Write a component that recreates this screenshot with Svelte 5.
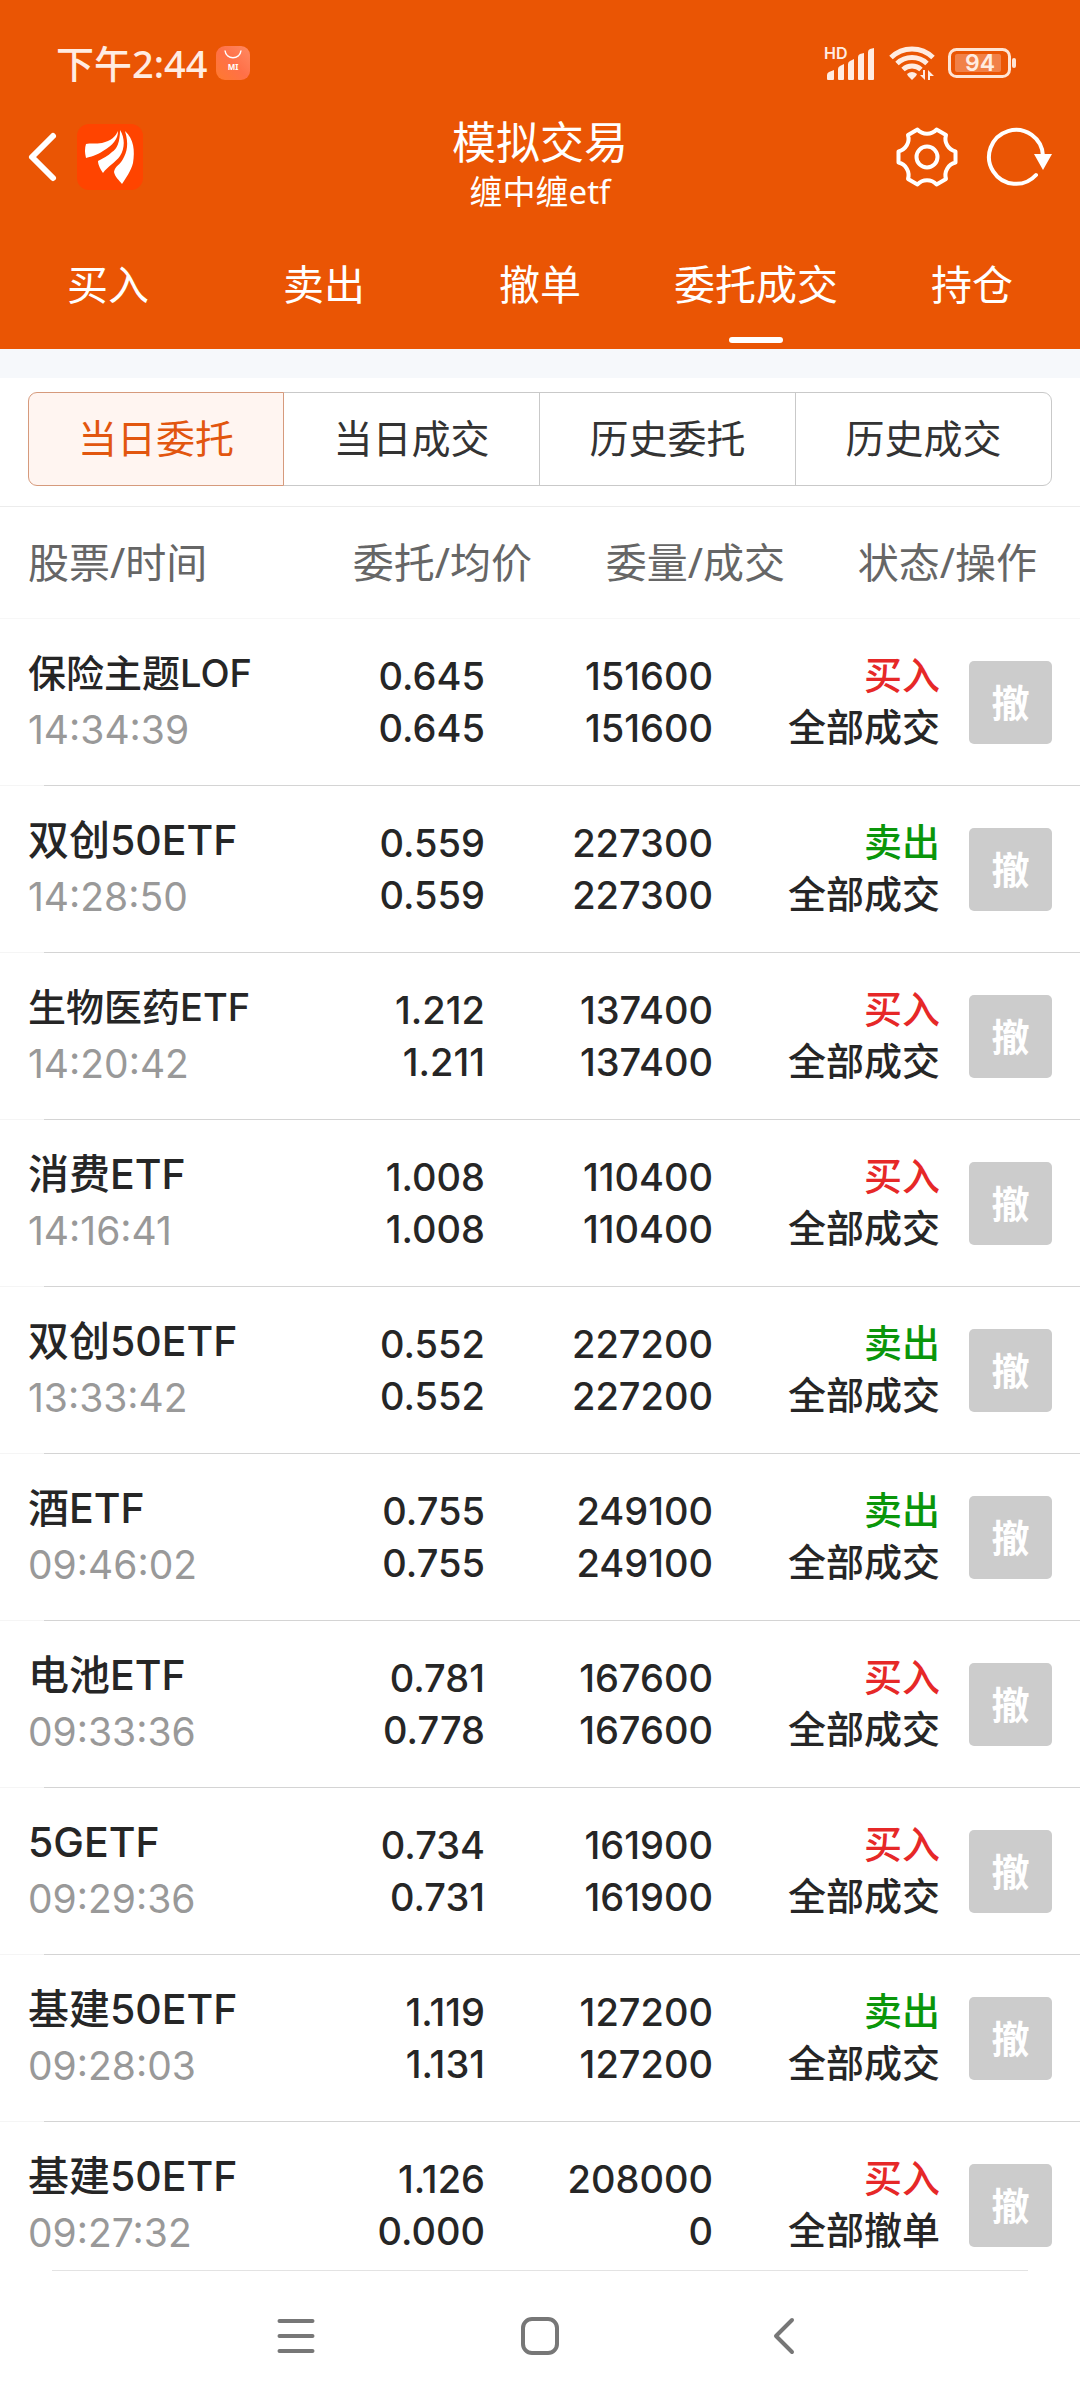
<script lang="ts">
    type Order = {
        name: string;
        time: string;
        price: string;
        avg: string;
        qty: string;
        filled: string;
        side: 'buy' | 'sell';
        status: string;
    };

    const tabs = ['买入', '卖出', '撤单', '委托成交', '持仓'];
    const views = ['当日委托', '当日成交', '历史委托', '历史成交'];

    const orders: Order[] = [
        { name: '保险主题LOF', time: '14:34:39', price: '0.645', avg: '0.645', qty: '151600', filled: '151600', side: 'buy', status: '全部成交' },
        { name: '双创50ETF', time: '14:28:50', price: '0.559', avg: '0.559', qty: '227300', filled: '227300', side: 'sell', status: '全部成交' },
        { name: '生物医药ETF', time: '14:20:42', price: '1.212', avg: '1.211', qty: '137400', filled: '137400', side: 'buy', status: '全部成交' },
        { name: '消费ETF', time: '14:16:41', price: '1.008', avg: '1.008', qty: '110400', filled: '110400', side: 'buy', status: '全部成交' },
        { name: '双创50ETF', time: '13:33:42', price: '0.552', avg: '0.552', qty: '227200', filled: '227200', side: 'sell', status: '全部成交' },
        { name: '酒ETF', time: '09:46:02', price: '0.755', avg: '0.755', qty: '249100', filled: '249100', side: 'sell', status: '全部成交' },
        { name: '电池ETF', time: '09:33:36', price: '0.781', avg: '0.778', qty: '167600', filled: '167600', side: 'buy', status: '全部成交' },
        { name: '5GETF', time: '09:29:36', price: '0.734', avg: '0.731', qty: '161900', filled: '161900', side: 'buy', status: '全部成交' },
        { name: '基建50ETF', time: '09:28:03', price: '1.119', avg: '1.131', qty: '127200', filled: '127200', side: 'sell', status: '全部成交' },
        { name: '基建50ETF', time: '09:27:32', price: '1.126', avg: '0.000', qty: '208000', filled: '0', side: 'buy', status: '全部撤单' },
    ];

    let activeTab = $state(3);
    let activeView = $state(0);

    // four Chinese characters and a suffix need the smaller size
    function isLong(name: string) {
        return /^[^\x00-\x7f]{4}/.test(name);
    }
</script>

<div class="page">
    <header>
        <div class="status-bar">
            <span class="clock">下午2:44</span>
            <svg class="mi" width="34" height="34" viewBox="0 0 34 34">
                <defs>
                    <linearGradient id="mi-bg" x1="0" y1="1" x2="1" y2="0">
                        <stop offset="0" stop-color="#ff7a2e" />
                        <stop offset="0.5" stop-color="#ff7048" />
                        <stop offset="1" stop-color="#ff8a62" />
                    </linearGradient>
                </defs>
                <rect width="34" height="34" rx="9" fill="url(#mi-bg)" />
                <path d="M9 4.500C10 14 24 14 25 4.500" fill="none" stroke="#fff" stroke-width="1.500" />
                <text x="17" y="24" text-anchor="middle" font-size="8" font-weight="700" fill="#fff">MI</text>
            </svg>
            <div class="indicators">
                <svg width="52" height="36" viewBox="0 0 52 36" fill="#ffece2">
                    <text x="0" y="14" font-size="16" font-weight="600">HD</text>
                    <path d="M3 34v-4q0-2 2-3l5-2v9q0 1-1 1h-5q-1 0-1-1z" />
                    <path d="M14 34v-10q0-2 2-3l4-2v15q0 1-1 1h-4q-1 0-1-1z" />
                    <path d="M24 34v-15q0-2 2-3l4-2v20q0 1-1 1h-4q-1 0-1-1z" />
                    <path d="M34 34v-22q0-2 2-3l4-1v26q0 1-1 1h-4q-1 0-1-1z" />
                    <path d="M44 34v-27q0-2 2-3l4-1v31q0 1-1 1h-4q-1 0-1-1z" />
                </svg>
                <svg width="46" height="36" viewBox="0 0 46 36">
                    <g fill="none" stroke="#ffece2" stroke-width="5">
                        <path d="M2 12.500A30 30 0 0 1 44 12.500" />
                        <path d="M8 18.500A22 22 0 0 1 38 18.500" />
                        <path d="M14 24.500A13.500 13.500 0 0 1 32 24.500" />
                    </g>
                    <path d="M18 29q5-4 10 0l-1 2-4 4-4-4z" fill="#ffece2" />
                    <path d="M31 30h3v-5h2v10zM39 35v-10l6 6h-4v4z" fill="#ffece2" />
                </svg>
                <svg width="70" height="30" viewBox="0 0 70 30">
                    <rect x="1.500" y="1.500" width="60" height="27" rx="7" fill="none" stroke="#ffe4d4" stroke-width="3" />
                    <rect x="7" y="6" width="46" height="18" rx="2" fill="#f18148" />
                    <rect x="64" y="10" width="4" height="10" rx="2" fill="#ffe4d4" />
                    <text x="32" y="23" text-anchor="middle" font-size="23" font-weight="600" fill="#ffece2">94</text>
                </svg>
            </div>
        </div>

        <div class="app-bar">
            <div class="side">
                <button class="icon" type="button" aria-label="返回">
                    <svg width="30" height="50" viewBox="0 0 30 50" fill="none" stroke="#fff" stroke-width="6" stroke-linecap="round" stroke-linejoin="round">
                        <path d="M25 4L4 25L25 46" />
                    </svg>
                </button>
                <svg class="logo" width="66" height="66" viewBox="0 0 66 66">
                    <rect width="66" height="66" rx="12" fill="#ff4400" />
                    <g fill="#fff">
                        <path d="M41 7C39 12 34 17 25 19C19 20 13 19 9 20Q7 26 9 34C13 33 20 31 26 27C36 21 41 15 41 7Z" />
                        <path d="M43 6C43 18 40 25 35 28C31 32 26 34 21 37C21 41 24 46 26 49C30 43 39 38 43 32C48 24 48 14 43 6Z" />
                        <path d="M48 7C52 20 50 28 46 35C43 41 38 42 37 48C38 53 42 56 45 60C49 54 54 47 56 39C58 27 57 15 48 7Z" />
                    </g>
                </svg>
            </div>
            <div class="title">
                <h1>模拟交易</h1>
                <p>缠中缠etf</p>
            </div>
            <div class="side actions">
                <button class="icon" type="button" aria-label="设置">
                    <svg width="62" height="62" viewBox="-31 -31 62 62" fill="none" stroke="#fff" stroke-width="4" stroke-linejoin="round">
                        <path d="M-9.500-27.400A13 13 0 0 0 9.500-27.400L19-21.900A13 13 0 0 0 28.500-5.500V5.500A13 13 0 0 0 19 21.900L9.500 27.400A13 13 0 0 0-9.500 27.400L-19 21.900A13 13 0 0 0-28.500 5.500V-5.500A13 13 0 0 0-19-21.900Z" />
                        <circle r="10.500" />
                    </svg>
                </button>
                <button class="icon" type="button" aria-label="刷新">
                    <svg width="66" height="62" viewBox="-30 -31 66 62">
                        <path d="M20 18A27 27 0 1 1 27-1" fill="none" stroke="#fff" stroke-width="4" stroke-linecap="round" />
                        <path d="M18-3H36L27 13Z" fill="#fff" />
                    </svg>
                </button>
            </div>
        </div>

        <nav class="tabs">
            {#each tabs as tab, i}
                <button type="button" class:active={i === activeTab} onclick={() => (activeTab = i)}>{tab}</button>
            {/each}
        </nav>
    </header>

    <main>
        <div class="views">
            {#each views as view, i}
                <button type="button" class:active={i === activeView} onclick={() => (activeView = i)}>{view}</button>
            {/each}
        </div>

        <table>
            <colgroup>
                <col />
                <col class="c-price" />
                <col class="c-qty" />
                <col class="c-status" />
                <col class="c-action" />
            </colgroup>
            <thead>
                <tr>
                    <th class="name">股票/时间</th>
                    <th>委托/均价</th>
                    <th>委量/成交</th>
                    <th class="last" colspan="2">状态/操作</th>
                </tr>
            </thead>
            <tbody>
                {#each orders as order}
                    <tr>
                        <td class="name">
                            <div class:long={isLong(order.name)}>{order.name}</div>
                            <time>{order.time}</time>
                        </td>
                        <td class="price">{order.price}<br />{order.avg}</td>
                        <td class="qty">{order.qty}<br />{order.filled}</td>
                        <td class="status">
                            <span class={order.side}>{order.side === 'buy' ? '买入' : '卖出'}</span><br />{order.status}
                        </td>
                        <td class="action"><button type="button" disabled>撤</button></td>
                    </tr>
                {/each}
            </tbody>
        </table>
    </main>

    <nav class="system">
        <button type="button" aria-label="菜单">
            <svg width="40" height="40" viewBox="0 0 40 40" stroke="#777" stroke-width="4" stroke-linecap="round">
                <path d="M3.500 5h33M3.500 20h33M3.500 35h33" />
            </svg>
        </button>
        <button type="button" aria-label="主页">
            <svg width="40" height="40" viewBox="0 0 40 40" fill="none" stroke="#777" stroke-width="4">
                <rect x="3" y="3" width="34" height="34" rx="9" />
            </svg>
        </button>
        <button type="button" aria-label="后退">
            <svg width="40" height="40" viewBox="0 0 40 40" fill="none" stroke="#777" stroke-width="4" stroke-linecap="round" stroke-linejoin="round">
                <path d="M28 4L12 20L28 36" />
            </svg>
        </button>
    </nav>
</div>

<style>
    :global(body) {
        margin: 0;
        background: #fff;
    }

    .page {
        font-family: 'Noto Sans', 'Noto Sans CJK SC', sans-serif;
        color: #262626;
        background: #fff;
    }

    button {
        padding: 0;
        border: 0;
        background: none;
        color: inherit;
        font: inherit;
        cursor: pointer;
    }

    svg {
        display: block;
        flex-shrink: 0;
        overflow: visible;
    }

    header {
        background: #ea5504;
        color: #fff;
    }

    .status-bar {
        display: flex;
        align-items: center;
        gap: 8px;
        height: 38px;
        padding: 44px 62px 33px 56px;
    }

    .clock {
        font-size: 38px;
        font-weight: 500;
        line-height: 38px;
        color: #ffece2;
    }

    .indicators {
        display: flex;
        align-items: center;
        gap: 13px;
        margin-left: auto;
        font-family: Inter, sans-serif;
    }

    .app-bar {
        display: grid;
        grid-template-columns: 1fr auto 1fr;
        padding: 0 28px;
    }

    .side {
        display: flex;
        align-items: center;
        gap: 19px;
        height: 84px;
    }

    .actions {
        justify-content: flex-end;
        gap: 28px;
    }

    .title {
        text-align: center;
    }

    h1 {
        margin: 0;
        font-size: 44px;
        font-weight: 400;
        line-height: 54px;
    }

    p {
        margin: 0;
        font-size: 33px;
        line-height: 46px;
    }

    .tabs {
        display: grid;
        grid-template-columns: repeat(5, 1fr);
    }

    .tabs button {
        position: relative;
        height: 134px;
        font-size: 41px;
    }

    .tabs .active::after {
        content: '';
        position: absolute;
        bottom: 6px;
        left: 50%;
        width: 54px;
        height: 6px;
        margin-left: -27px;
        border-radius: 3px;
        background: #fff;
    }

    main {
        border-top: 29px solid #f6f8fb;
    }

    .views {
        display: grid;
        grid-template-columns: repeat(4, 1fr);
        padding: 14px 28px 20px;
        border-bottom: 1px solid #ececec;
    }

    .views button {
        height: 94px;
        margin-left: -1px;
        padding-bottom: 6px;
        border: 1px solid #c9c9c9;
        font-size: 39px;
        color: #333;
    }

    .views button:first-child {
        margin-left: 0;
        border-radius: 9px 0 0 9px;
    }

    .views button:last-child {
        border-radius: 0 9px 9px 0;
    }

    .views .active {
        z-index: 1;
        border-color: #d69a7c;
        background: #fff5f1;
        color: #e2560f;
    }

    table {
        width: 100%;
        table-layout: fixed;
        border-collapse: collapse;
    }

    .c-price {
        width: 231px;
    }

    .c-qty {
        width: 253px;
    }

    .c-status {
        width: 155px;
    }

    .c-action {
        width: 140px;
    }

    th {
        height: 106px;
        padding: 0 0 6px;
        font-size: 41px;
        font-weight: 400;
        color: #666;
        text-align: right;
        white-space: nowrap;
    }

    th.last {
        padding-right: 43px;
    }

    thead tr {
        background: linear-gradient(#f7f7f7, #f7f7f7) bottom / 100% 1px no-repeat;
    }

    tbody tr {
        height: 167px;
        background: linear-gradient(to right, #f5f5f5 44px, #d4d4d4 44px) bottom / 100% 1px no-repeat;
    }

    tbody tr:last-child {
        height: 148px;
        background: none;
    }

    td {
        padding: 31px 0 0;
        font-family: Inter, 'Noto Sans CJK SC', sans-serif;
        font-size: 38px;
        font-weight: 500;
        line-height: 52px;
        text-align: right;
        vertical-align: top;
        white-space: nowrap;
    }

    .name {
        padding-left: 28px;
        text-align: left;
    }

    td.name {
        padding-top: 26px;
        font-size: 41px;
        line-height: 56px;
    }

    .long {
        font-size: 38px;
    }

    time {
        display: block;
        font-size: 39px;
        line-height: 58px;
        font-weight: 400;
        color: #999;
    }

    .price {
        padding-right: 47px;
    }

    .qty {
        padding-right: 72px;
    }

    .status {
        padding-top: 30px;
    }

    .buy {
        color: #e62828;
    }

    .sell {
        color: #0a960a;
    }

    .action {
        padding: 42px 28px 0 0;
    }

    .action button {
        display: block;
        width: 83px;
        height: 83px;
        margin-left: auto;
        border-radius: 5px;
        background: #ccc;
        color: #fff;
        font-size: 38px;
        font-weight: 700;
        line-height: 78px;
    }

    .system {
        display: flex;
        justify-content: center;
        align-items: center;
        gap: 204px;
        height: 129px;
        margin: 0 52px;
        border-top: 1px solid #e3e3e3;
    }
</style>
